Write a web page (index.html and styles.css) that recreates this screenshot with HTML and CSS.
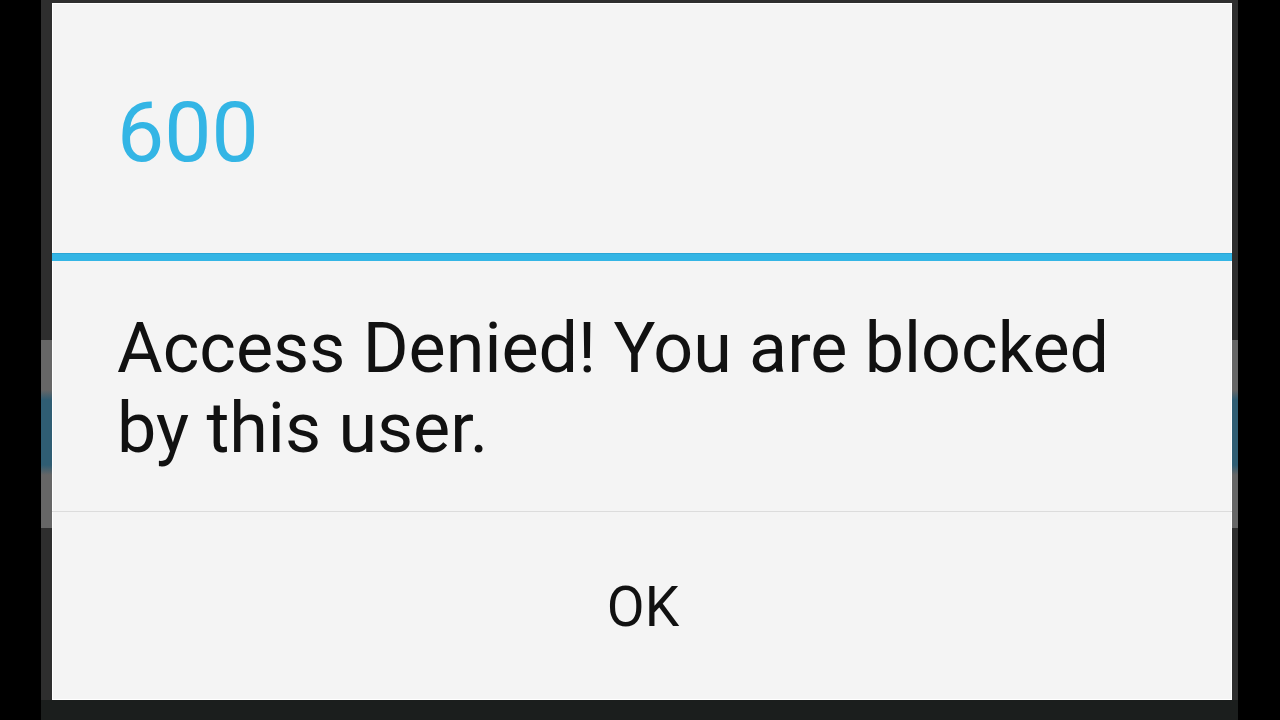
FILE: index.html
```html
<!DOCTYPE html>
<html>
<head>
<meta charset="utf-8">
<link rel="stylesheet" href="styles.css">
</head>
<body>
<div class="screen">
  <div class="dialog">
    <div class="title-area"><span class="title">600</span></div>
    <div class="title-divider"></div>
    <div class="message-area">
      <p class="message">Access Denied! You are blocked by this user.</p>
    </div>
    <div class="button-area"><span class="ok">OK</span></div>
  </div>
</div>
</body>
</html>
```
FILE: styles.css
```css
html, body {
  margin: 0;
  padding: 0;
  background: #000;
  width: 1280px;
  height: 720px;
  overflow: hidden;
}
.screen {
  margin-left: 41px;
  width: 1197px;
  height: 720px;
  box-sizing: border-box;
  padding: 3px 6px 20px 11px;
  background:
    linear-gradient(to bottom, #2e2e2e 0, #2e2e2e 340px, #666 340px, #666 390px, #2f5d73 400px, #2f5d73 465px, #666 475px, #666 528px, #2e2e2e 528px, #2e2e2e 700px, #1b1e1d 700px);
  font-family: Roboto, "Noto Sans", sans-serif;
}
.dialog {
  width: 1180px;
  height: 697px;
  background: #f4f4f4;
  box-shadow: inset 1px 1px 0 #fff, inset -1px -1px 0 #fff;
  display: flex;
  flex-direction: column;
}
.title-area {
  height: 250px;
  display: flex;
  align-items: center;
  padding-left: 65px;
  box-sizing: border-box;
  padding-top: 9px;
}
.title {
  color: #33b5e5;
  font-size: 84px;
  line-height: 1;
}
.title-divider {
  height: 7px;
  background: #33b5e5;
  border-top: 1px solid #2aa6d6;
}
.message-area {
  height: 251px;
  padding: 47px 80px 0 65px;
  box-sizing: border-box;
  border-bottom: 1px solid #dcdcdc;
}
.message {
  margin: 0;
  font-size: 70px;
  line-height: 80px;
  color: #111;
}
.button-area {
  flex: 1;
  display: flex;
  align-items: center;
  justify-content: center;
  padding-top: 3px;
  padding-left: 2px;
}
.ok {
  font-size: 55px;
  color: #111;
  line-height: 1;
}
```
